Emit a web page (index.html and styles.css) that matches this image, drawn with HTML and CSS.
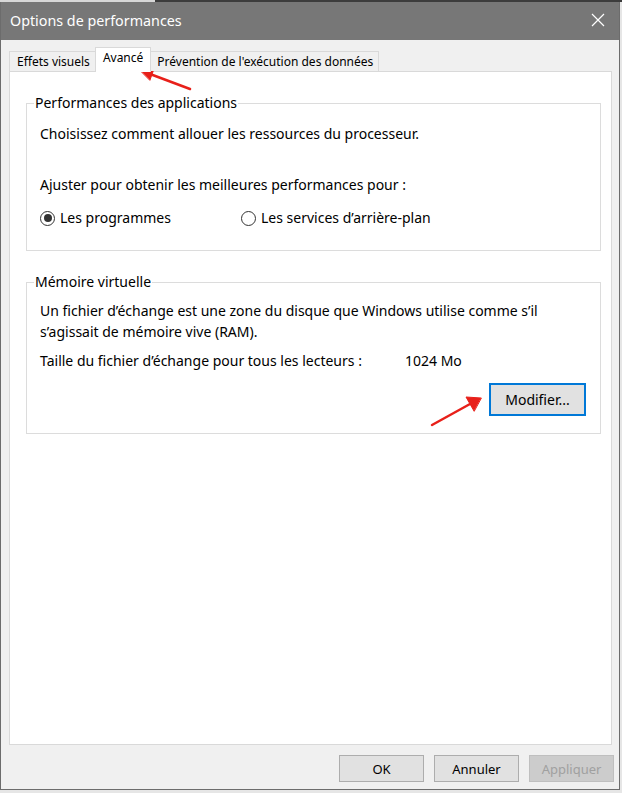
FILE: index.html
```html
<!DOCTYPE html>
<html lang="fr">
<head>
<meta charset="utf-8">
<link rel="stylesheet" href="styles.css">
</head>
<body>
<div class="topstrip"></div>
<div class="window">
  <div class="titlebar">
    <span class="title">Options de performances</span>
    <svg class="close" width="14" height="14" viewBox="0 0 14 14"><path d="M1 1L13 13M13 1L1 13" stroke="#fff" stroke-width="1.2"/></svg>
  </div>
  <div class="body">
    <div class="tabs">
      <div class="tab">Effets visuels</div>
      <div class="tab selected">Avancé</div>
      <div class="tab">Prévention de l'exécution des données</div>
    </div>
    <div class="panel">
      <fieldset class="group g1">
        <legend>Performances des applications</legend>
        <p class="line first">Choisissez comment allouer les ressources du processeur.</p>
        <p class="line adjust">Ajuster pour obtenir les meilleures performances pour :</p>
        <div class="radios">
          <label class="radio r1"><span class="dot checked"></span>Les programmes</label>
          <label class="radio r2"><span class="dot"></span>Les services d’arrière-plan</label>
        </div>
      </fieldset>
      <fieldset class="group g2">
        <legend>Mémoire virtuelle</legend>
        <p class="line first2">Un fichier d’échange est une zone du disque que Windows utilise comme s’il<br>s’agissait de mémoire vive (RAM).</p>
        <div class="size"><span class="size-label">Taille du fichier d’échange pour tous les lecteurs :</span><span>1024 Mo</span></div>
        <div class="modrow"><button class="btn modify">Modifier...</button></div>
      </fieldset>
    </div>
    <div class="buttons">
      <button class="btn">OK</button>
      <button class="btn">Annuler</button>
      <button class="btn disabled">Appliquer</button>
    </div>
  </div>
</div>
<svg class="arrows" width="622" height="793" viewBox="0 0 622 793">
  <g stroke="#e8201a" stroke-width="2.5" fill="#e8201a" stroke-linecap="round">
    <line x1="190" y1="89" x2="150" y2="74"/>
    <polygon points="139,69 155,66 150,80" stroke-width="1" stroke-linejoin="round"/>
    <line x1="432" y1="425" x2="470" y2="404"/>
    <polygon points="481,398 466,397 474,411" stroke-width="1" stroke-linejoin="round"/>
  </g>
</svg>
</body>
</html>
```
FILE: styles.css
```css
html, body {
  margin: 0;
  padding: 0;
  background: #e6e6e6;
  width: 622px;
  height: 793px;
  overflow: hidden;
  font-family: "Noto Sans", "Open Sans", sans-serif;
}
.topstrip {
  height: 2px;
  background: linear-gradient(to right, #d8d8d8 0 155px, #3c3c3c 155px);
}
.window {
  width: 618px;
  height: 787px;
  border: 1px solid #6c6c6c;
  border-top: none;
  display: flex;
  flex-direction: column;
}
.titlebar {
  height: 38px;
  background: #777777;
  display: flex;
  align-items: center;
  justify-content: space-between;
  padding: 0 14px 0 9px;
  flex: none;
}
.title {
  color: #fff;
  font-size: 14.3px;
  margin-top: -1px;
}
.close { margin-top: -2px; }
.body {
  flex: 1;
  background: #f0f0f0;
  padding: 8px 5px 0 8px;
  display: flex;
  flex-direction: column;
}
.tabs {
  display: flex;
  align-items: flex-end;
  height: 23px;
  font-size: 12px;
  color: #000;
  position: relative;
  z-index: 1;
}
.tab {
  border: 1px solid #d9d9d9;
  border-bottom: none;
  background: #f0f0f0;
  height: 19px;
  padding: 0 5px 0 7px;
  line-height: 19px;
  margin-left: -1px;
  white-space: nowrap;
}
.tab:first-child { margin-left: 0; }
.tab.selected {
  background: #fff;
  height: 24px;
  line-height: 20px;
  padding: 0 7px 0 7px;
  margin-bottom: -1px;
  margin-left: -1px;
  margin-right: -1px;
  position: relative;
  z-index: 2;
}
.panel {
  width: 603px;
  height: 674px;
  background: #fff;
  border: 1px solid #d9d9d9;
  padding: 22px 0 0 16px;
  box-sizing: border-box;
  flex: none;
}
.group {
  width: 575px;
  box-sizing: border-box;
  border: 1px solid #dcdcdc;
  margin: 0;
  padding: 0 0 0 13px;
  font-size: 14px;
  color: #000;
}
.group legend {
  padding: 0 1px;
  margin-left: -6px;
  font-size: 14px;
  line-height: 18px;
  color: #000;
}
.g1 { height: 157px; }
.g2 { height: 161px; margin-top: 22px; }
.line {
  margin: 0;
  line-height: 21px;
}
.first { margin-top: 11px; }
.adjust { margin-top: 30px; }
.radios {
  display: flex;
  margin-top: 13px;
}
.radio {
  display: flex;
  align-items: center;
  line-height: 20px;
}
.r1 { width: 201px; }
.dot {
  width: 15px;
  height: 15px;
  border: 1px solid #333;
  border-radius: 50%;
  margin-right: 5px;
  box-sizing: border-box;
  position: relative;
  background: #fff;
}
.dot.checked::after {
  content: "";
  position: absolute;
  left: 2.5px;
  top: 2.5px;
  width: 8px;
  height: 8px;
  border-radius: 50%;
  background: #333;
}
.first2 { margin-top: 9px; }
.size {
  display: flex;
  margin-top: 8px;
  line-height: 21px;
}
.size-label { width: 365px; }
.modrow {
  display: flex;
  justify-content: flex-end;
  padding-right: 14px;
  margin-top: 12px;
}
.btn {
  font-family: inherit;
  font-size: 13px;
  width: 85px;
  height: 27px;
  background: #e1e1e1;
  border: 1px solid #adadad;
  color: #000;
  padding: 0;
  margin: 0;
}
.btn.modify {
  width: 97px;
  height: 33px;
  border: 2px solid #0078d7;
  font-size: 14px;
}
.buttons {
  display: flex;
  justify-content: flex-end;
  gap: 10px;
  margin-top: 10px;
}
.btn.disabled {
  background: #cccccc;
  border-color: #bfbfbf;
  color: #a0a0a0;
}
.arrows {
  position: absolute;
  left: 0;
  top: 0;
  pointer-events: none;
}
```
